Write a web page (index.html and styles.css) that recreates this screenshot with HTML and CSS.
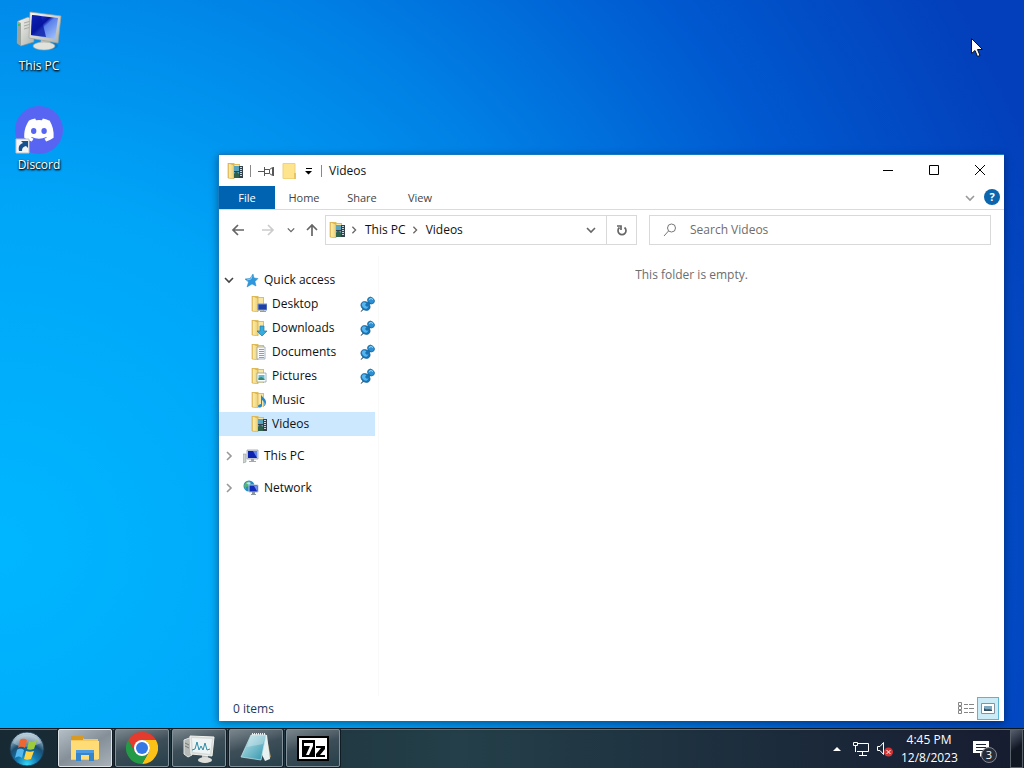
FILE: index.html
```html
<!DOCTYPE html>
<html lang="en">
  <head>
    <meta charset="utf-8">
    <meta name="viewport" content="width=device-width, initial-scale=1">
    <title>Videos</title>
    <link rel="stylesheet" href="styles.css">
  </head>
  <body>
    <!-- shared icons -->
    <svg class="defs" aria-hidden="true">
      <defs>
        <linearGradient id="g-folder" x1="0" x2="1" y1="0" y2="0">
          <stop offset="0" stop-color="#e6bd56"/><stop offset=".25" stop-color="#fae9a5"/><stop offset="1" stop-color="#edcf70"/>
        </linearGradient>
        <linearGradient id="g-screen" x1="0" x2="1" y1="0" y2="1">
          <stop offset="0" stop-color="#2b48d8"/><stop offset=".4" stop-color="#0714a0"/><stop offset=".5" stop-color="#5b80ea"/><stop offset="1" stop-color="#a6cbff"/>
        </linearGradient>
        <linearGradient id="g-metal" x1="0" x2="1" y1="0" y2="1">
          <stop offset="0" stop-color="#f8f8f3"/><stop offset="1" stop-color="#aeb1ac"/>
        </linearGradient>
        <linearGradient id="g-note" x1="0" x2="1" y1="0" y2="1">
          <stop offset="0" stop-color="#c9e9ee"/><stop offset="1" stop-color="#2b93ab"/>
        </linearGradient>
        <radialGradient id="g-orb" cx=".5" cy=".95" r=".9">
          <stop offset="0" stop-color="#35d6f7"/><stop offset=".35" stop-color="#137ab1"/><stop offset=".65" stop-color="#1b4e71"/><stop offset="1" stop-color="#bcd0da"/>
        </radialGradient>
        <symbol id="folder" viewBox="0 0 16 16">
          <path d="M1 0h6l1 1h5v14H1z" fill="#e3bd58"/>
          <path d="M4 2h8v13H4z" fill="#f7e6a4"/>
          <path d="M1 0l6 2v14l-6-1z" fill="url(#g-folder)" stroke="#d0a545" stroke-width=".6"/>
        </symbol>
        <symbol id="video" viewBox="0 0 16 16">
          <use href="#folder"/>
          <path d="M7 3h8v12H7z" fill="#5ba4bd"/>
          <path d="M7 11l2-3 4 4v3H7z" fill="#31614b"/>
          <path d="M12 3h4v12h-4zM7 8h5v1H7z" fill="#33414e"/>
          <path d="M13 4h2v1h-2zM13 6h2v1h-2zM13 8h2v1h-2zM13 10h2v1h-2zM13 12h2v1h-2z" fill="#cbd7df"/>
        </symbol>
        <symbol id="desktop" viewBox="0 0 16 16">
          <use href="#folder"/>
          <path d="M7 8h9v6H7z" fill="#1f3faa" stroke="#7995c5"/><path d="M9 15h6v1H9z" fill="#8e9eb1"/>
        </symbol>
        <symbol id="download" viewBox="0 0 16 16">
          <use href="#folder"/><path d="M9 6h4v5h3l-5 5-5-5h3z" fill="#35acde" stroke="#2279ae" stroke-width=".7"/>
        </symbol>
        <symbol id="document" viewBox="0 0 16 16">
          <use href="#folder"/><path d="M6 3h8v12H6z" fill="#f7f9fc" stroke="#93a5b8" stroke-width=".8"/><path d="M8 5.500h5M8 7.500h5M8 9.500h5M8 11.500h5M8 13.500h5" stroke="#6689b2" stroke-width=".8"/>
        </symbol>
        <symbol id="picture" viewBox="0 0 16 16">
          <use href="#folder"/><path d="M6 5h9v9H6z" fill="#f9ffff" stroke="#8ba1ac" stroke-width=".8"/><path d="M7.500 7h6v5h-6z" fill="#6bbad4"/><path d="M7.500 10l3-1 3 2v1h-6z" fill="#388870"/>
        </symbol>
        <symbol id="music" viewBox="0 0 16 16">
          <use href="#folder"/><path d="M10 2c0 3 5 4 5 8 0 2-1 4-2 4 1-3 0-5-2-6v6c-1 2-4 2-4 0 0-1 2-2 3-2z" fill="#2688ca"/>
        </symbol>
        <symbol id="computer" viewBox="0 0 16 16">
          <path d="M0 6h3v8l-3 1z" fill="#cdd4cf" stroke="#8a938f" stroke-width=".5"/>
          <path d="M4 2h11v9H4z" fill="#d6dce4" stroke="#8e96a3" stroke-width=".7"/><path d="M5 3h9v7H5z" fill="#0d22b0"/><path d="M10 3h4v7z" fill="#5f84e8"/>
          <path d="M8 11h3v2h2v1H6v-1h2z" fill="#a2a9ae"/>
        </symbol>
        <symbol id="network" viewBox="0 0 16 16">
          <circle cx="6" cy="6" r="5.500" fill="#258cc4"/><path d="M1 6c1-4 4-5 6-5l-2 3 1 2-3 1v3z" fill="#5ab56b"/><path d="M3 3l3-1 2 1-2 2z" fill="#b9e8ed"/>
          <path d="M6 5h9v7H6z" fill="#112bb8" stroke="#c1cbd7"/><path d="M11 6h3v5z" fill="#7092eb"/><path d="M9 12h3v2h1v1H8v-1h1z" fill="#8c969e"/>
        </symbol>
        <symbol id="pushpin" viewBox="0 0 16 16">
          <path d="M2 15.500l3-4 1 1z" fill="#6d8494" stroke="#6d8494"/>
          <ellipse cx="6.500" cy="10" rx="5" ry="4" transform="rotate(40 6.500 10)" fill="#1976b8" stroke="#155b8d" stroke-width=".6"/>
          <ellipse cx="6" cy="9.500" rx="3.500" ry="2.500" transform="rotate(40 6 9.500)" fill="#55b5ee"/>
          <path d="M6 9l4-5 3 3-5 4z" fill="#1b73b3"/>
          <ellipse cx="12" cy="4.500" rx="3.700" ry="3" transform="rotate(40 12 4.500)" fill="#2b8fd1" stroke="#155b8d" stroke-width=".6"/>
          <path d="M10 3.500l2-1 2 1" stroke="#9bdcfa" fill="none"/>
        </symbol>
        <symbol id="chev-down" viewBox="0 0 10 10"><path d="M1 3l4 4 4-4" fill="none" stroke="currentColor" stroke-width="1.600"/></symbol>
        <symbol id="chev-right" viewBox="0 0 10 10"><path d="M3 1l4 4-4 4" fill="none" stroke="currentColor" stroke-width="1.600"/></symbol>
        <symbol id="arrow" viewBox="0 0 14 14"><path d="M13 7H2M7 2L2 7l5 5" fill="none" stroke="currentColor" stroke-width="1.700"/></symbol>
      </defs>
    </svg>

    <main class="desktop">
      <div class="shortcuts">
        <a class="shortcut" href="#pc">
          <svg class="icon-48" viewBox="0 0 48 48">
            <path d="M3 14l10-4 6 3v22L6 39l-4-3z" fill="url(#g-metal)" stroke="#868c88" stroke-width=".6"/>
            <path d="M2 14l4 2v23l-4-3z" fill="#9da39d"/><path d="M9 16l7-2M9 19l7-2M9 22l7-2" stroke="#a5a9a4"/><path d="M3 17h2v2H3z" fill="#32c45c"/>
            <ellipse cx="31" cy="39" rx="12" ry="4" fill="#125f90" opacity=".4"/>
            <path d="M26 33h9l1 6H25z" fill="#c4c6c1"/><ellipse cx="29" cy="39" rx="11" ry="4" fill="#e1e2dc" stroke="#a2a59f" stroke-width=".6"/>
            <path d="M15 5l31 4-3 27-29-5z" fill="url(#g-metal)" stroke="#9fa29c" stroke-width=".7"/>
            <path d="M17 8l26 3-3 21-24-4z" fill="url(#g-screen)"/><path d="M17 8l9 1 5 21-15-2z" fill="#0516a2" opacity=".75"/>
          </svg>
          <span>This PC</span>
        </a>
        <a class="shortcut" href="#discord">
          <svg class="icon-48" viewBox="0 0 48 48">
            <circle cx="24" cy="24" r="24" fill="#5865f2"/>
            <path d="M34 14.500a25 25 0 0 0-6.200-1.900l-.8 1.600a24 24 0 0 0-6 0l-.8-1.600a25 25 0 0 0-6.200 1.900C10 20.500 9 26 9.300 31.800a25 25 0 0 0 7.500 3.700l1.700-2.700-2.400-1.200.6-.5a18 18 0 0 0 14.600 0l.6.5-2.400 1.200 1.600 2.700a25 25 0 0 0 7.500-3.700c.5-6.500-1-12.300-4-17.300z" fill="#fff"/>
            <ellipse cx="18.700" cy="25" rx="2.700" ry="3" fill="#5865f2"/><ellipse cx="29.100" cy="25" rx="2.700" ry="3" fill="#5865f2"/>
            <path d="M1 33h13v14H1z" fill="#f4f5f7" stroke="#c0c4c9"/><path d="M4 45c-1-5 1-7 4-8l-2-2h7v7l-2-2c-3 1-4 2-4 5z" fill="#17508e"/>
          </svg>
          <span>Discord</span>
        </a>
      </div>

      <section class="window">
        <header class="titlebar">
          <svg class="icon-16"><use href="#video"/></svg>
          <i class="sep"></i>
          <button class="quick" aria-label="Properties"><svg class="icon-16" viewBox="0 0 16 16"><path d="M0 8.500h6M6.500 4v9M6.500 6.500h5v4h-5M11.500 6.500l3-2v8l-3-2M15.500 4v9" fill="none" stroke="#555"/></svg></button>
          <button class="quick" aria-label="New folder"><svg class="icon-16" viewBox="0 0 16 16"><path d="M2 .500h12v15H2z" fill="#ffe48e" stroke="#efd27a"/><path d="M13 10h2v6h-2z" fill="#e9c460"/></svg></button>
          <button class="quick" aria-label="Customize"><svg class="icon-10" viewBox="0 0 10 10"><path d="M2 2h6v1H2zM1 5h7L4.500 8.500z"/></svg></button>
          <i class="sep"></i>
          <h1 class="title">Videos</h1>
          <div class="controls">
            <button aria-label="Minimize"><svg class="icon-12" viewBox="0 0 12 12"><path d="M1 5.500h10"/></svg></button>
            <button aria-label="Maximize"><svg class="icon-12" viewBox="0 0 12 12"><path d="M1.500.500h9v9h-9z"/></svg></button>
            <button aria-label="Close"><svg class="icon-12" viewBox="0 0 12 12"><path d="M1 0l10 10M11 0L1 10"/></svg></button>
          </div>
        </header>

        <nav class="tabs">
          <button class="tab tab-file">File</button>
          <button class="tab">Home</button>
          <button class="tab">Share</button>
          <button class="tab">View</button>
          <button class="expand" aria-label="Expand the ribbon"><svg class="icon-10"><use href="#chev-down"/></svg></button>
          <button class="help" aria-label="Help">?</button>
        </nav>

        <div class="toolbar">
          <div class="history">
            <button aria-label="Back"><svg class="icon-14"><use href="#arrow"/></svg></button>
            <button class="off" aria-label="Forward"><svg class="icon-14 flip"><use href="#arrow"/></svg></button>
            <button class="recent" aria-label="Recent locations"><svg class="icon-8"><use href="#chev-down"/></svg></button>
            <button class="up" aria-label="Up"><svg class="icon-14 turn"><use href="#arrow"/></svg></button>
          </div>
          <div class="address">
            <svg class="icon-16"><use href="#video"/></svg>
            <svg class="icon-8 crumb-sep"><use href="#chev-right"/></svg>
            <a href="#pc">This PC</a>
            <svg class="icon-8 crumb-sep"><use href="#chev-right"/></svg>
            <a href="#videos">Videos</a>
            <button class="drop" aria-label="Previous locations"><svg class="icon-10"><use href="#chev-down"/></svg></button>
            <button class="refresh" aria-label="Refresh"><svg class="icon-14" viewBox="0 0 14 14"><path d="M9.500 4.500a4 4 0 1 1-5 0M2 3h4v4" fill="none" stroke="currentColor" stroke-width="1.700"/></svg></button>
          </div>
          <label class="search">
            <svg class="icon-14" viewBox="0 0 14 14"><circle cx="8.500" cy="5" r="4" /><path d="M5.500 8L1 13"/></svg>
            <input type="search" placeholder="Search Videos" aria-label="Search Videos">
          </label>
        </div>

        <div class="panes">
          <nav class="tree">
            <a class="root" href="#quick">
              <svg class="icon-10 open"><use href="#chev-down"/></svg>
              <svg class="icon-16" viewBox="0 0 16 16"><path d="M10 2l1 4 4 .500-3 3 1 4.500-4-2-5 3 1.500-5L2 7l5-.500z" fill="#3097dc" stroke="#2388c9" stroke-width=".5"/><path d="M9 4l-1 3-4 1" stroke="#83ccf6" fill="none"/></svg>
              <span>Quick access</span>
            </a>
            <a class="leaf" href="#desktop-folder"><svg class="icon-16"><use href="#desktop"/></svg><span>Desktop</span><svg class="icon-16"><use href="#pushpin"/></svg></a>
            <a class="leaf" href="#downloads"><svg class="icon-16"><use href="#download"/></svg><span>Downloads</span><svg class="icon-16"><use href="#pushpin"/></svg></a>
            <a class="leaf" href="#documents"><svg class="icon-16"><use href="#document"/></svg><span>Documents</span><svg class="icon-16"><use href="#pushpin"/></svg></a>
            <a class="leaf" href="#pictures"><svg class="icon-16"><use href="#picture"/></svg><span>Pictures</span><svg class="icon-16"><use href="#pushpin"/></svg></a>
            <a class="leaf" href="#music-folder"><svg class="icon-16"><use href="#music"/></svg><span>Music</span></a>
            <a class="leaf selected" href="#videos"><svg class="icon-16"><use href="#video"/></svg><span>Videos</span></a>
            <a class="root spaced" href="#pc"><svg class="icon-10"><use href="#chev-right"/></svg><svg class="icon-16"><use href="#computer"/></svg><span>This PC</span></a>
            <a class="root spaced" href="#net"><svg class="icon-10"><use href="#chev-right"/></svg><svg class="icon-16"><use href="#network"/></svg><span>Network</span></a>
          </nav>
          <p class="content">This folder is empty.</p>
        </div>

        <footer class="status">
          <span>0 items</span>
          <div class="views">
            <button aria-label="Details"><svg class="icon-16" viewBox="0 0 16 16"><path d="M.5 1.500h3v3h-3zM.5 5.500h3v3h-3zM.5 9.500h3v3h-3zM6 3.500h4M11 3.500h5M6 7.500h4M11 7.500h5M6 11.500h4M11 11.500h5" fill="none" stroke="#858585"/></svg></button>
            <button class="active" aria-label="Large icons"><svg class="icon-16" viewBox="0 0 16 16"><path d="M1.500 2.500h13v10h-13z" fill="#fff" stroke="#84939d"/><path d="M4 5h8v5H4z" fill="#7da8bf"/><path d="M4 7c3 3 4 0 8 2v1H4z" fill="#334c5e"/></svg></button>
          </div>
        </footer>
      </section>

      <svg class="cursor" viewBox="0 0 12 19"><path d="M.5.5v15l3.500-3 2.500 6 2.500-1-2.500-6h5z" fill="#fff" stroke="#111"/></svg>
    </main>

    <footer class="taskbar">
      <button class="start" aria-label="Start">
        <svg class="icon-36" viewBox="0 0 36 36">
          <circle cx="18" cy="18" r="17" fill="url(#g-orb)" stroke="#17384e"/>
          <path d="M4 12C8 1 28 1 32 12c-8 4-20 6-28 0z" fill="#d9e7ee" opacity=".4"/>
          <path d="M11 9c3-2 5-1 7 0l-2 8c-2-1-4-2-7 0z" fill="#ee6632"/><path d="M20 10c2 1 4 1 8-1l-3 9c-3 1-5 1-7 0z" fill="#9dcb3b"/>
          <path d="M8 19c3-2 5-1 7 0l-2 8c-2-2-4-2-7 0z" fill="#55b9ef"/><path d="M17 20c3 1 5 1 8 0l-3 8c-3 1-5 1-7 0z" fill="#ffd447"/>
        </svg>
      </button>
      <div class="tasks">
        <button class="task current" aria-label="File Explorer">
          <svg class="icon-32" viewBox="0 0 32 32"><path d="M2 5h11l2 2h14v21H2z" fill="#f5c85b"/><path d="M2 4h12v4H2z" fill="#d99a24"/><path d="M2 9h28v18H2z" fill="#ffdc75"/><path d="M7 18h18v11h-5v-6h-8v6H7z" fill="#3485cb"/><path d="M7 18h18v3H7z" fill="#4d9be0"/></svg>
        </button>
        <button class="task" aria-label="Google Chrome">
          <svg class="icon-32" viewBox="0 0 32 32"><path d="M2.140 8a16 16 0 0 1 27.720 0H16L9.100 20z" fill="#e33b2e"/><path d="M29.860 8A16 16 0 0 1 16 32l6.900-12A8 8 0 0 0 16 8z" fill="#fbc116"/><path d="M16 32A16 16 0 0 1 2.140 8L9.100 20a8 8 0 0 0 13.800 0z" fill="#249a46"/><circle cx="16" cy="16" r="8" fill="#fff"/><circle cx="16" cy="16" r="6" fill="#3578e5"/></svg>
        </button>
        <button class="task" aria-label="Task Manager">
          <svg class="icon-32" viewBox="0 0 32 32"><path d="M1 8l8-3v18l-4 2-4-3z" fill="#b6bab8" stroke="#e3e5e2"/><path d="M2 11l4 2M2 14l4 2" stroke="#777"/><path d="M19 22h6v5h-6z" fill="#b7bbb9"/><ellipse cx="22" cy="28" rx="7" ry="3" fill="#dedfda"/><path d="M7 4l24 1-2 19-21-2z" fill="#d6dad9" stroke="#f2f3ef"/><path d="M9 6l20 1-2 15-17-2z" fill="#edf4f3"/><path d="M9 18l3-1 2-7 2 8 2-4 2 4 2-7 2 7 3-1" fill="none" stroke="#2f8aa7"/></svg>
        </button>
        <button class="task" aria-label="Notepad">
          <svg class="icon-32" viewBox="0 0 32 32"><path d="M26 3l5 22-5 3z" fill="#aa9360"/><path d="M12 2l15 1 3 24-5 2z" fill="#e8f1f1"/><path d="M11 3h15l-5 25-20-3z" fill="url(#g-note)" stroke="#c5e6e9" stroke-width=".7"/><path d="M11 3h15l-3 9-16 3z" fill="#fff" opacity=".3"/><path d="M12 2h14" stroke="#e8eeee" stroke-width="2" stroke-dasharray="1 1"/></svg>
        </button>
        <button class="task" aria-label="7-Zip">
          <svg class="icon-32" viewBox="0 0 32 32"><path d="M0 4h32v25H0z"/><path d="M2 6h28v21H2z" fill="#fff"/><path d="M5 8h13v17H5z"/><path d="M7 11h9v3l-4 9H9l4-9H7z" fill="#fff"/><path d="M19 14h9v3l-5 6h5v2h-9v-3l5-6h-5z"/></svg>
        </button>
      </div>
      <div class="tray">
        <button class="hidden-icons" aria-label="Show hidden icons"><svg class="icon-8" viewBox="0 0 8 8"><path d="M0 6l4-4 4 4z" fill="#fff"/></svg></button>
        <svg class="icon-16" viewBox="0 0 16 16"><path d="M5 2.500h10.500v8H4M9.500 11v3M6 14.500h8M.5 1.500h4v3h-4zM2.500 5v6" fill="none" stroke="#fff"/></svg>
        <svg class="icon-16" viewBox="0 0 16 16"><path d="M.5 5.500H3L6.500 1.500v12L3 9.500H.5z" fill="none" stroke="#fff"/><circle cx="11.500" cy="11" r="4.500" fill="#d93434"/><path d="M9.500 9l4 4M13.500 9l-4 4" stroke="#fff"/></svg>
        <time class="clock">4:45 PM<br>12/8/2023</time>
        <button class="notices" aria-label="Notifications">
          <svg class="icon-16" viewBox="0 0 16 16"><path d="M0 0h16v12h-5l-4 4v-4H0z" fill="#fff"/><path d="M3 3.500h10M3 6.500h10M3 9.500h7" stroke="#1b2533"/></svg>
          <span class="badge">3</span>
        </button>
      </div>
      <button class="peek" aria-label="Show desktop"></button>
    </footer>
  </body>
</html>
```
FILE: styles.css
```css
* { box-sizing: border-box }
body { margin: 0; height: 100vh; display: flex; flex-direction: column; overflow: hidden; font: 12px/18px "Open Sans", "Noto Sans", sans-serif; color: #111 }
button { margin: 0; padding: 0; border: 0; background: none; font: inherit; color: inherit; display: flex; align-items: center; justify-content: center }
a { color: inherit; text-decoration: none }
svg { display: block; flex: none }
.defs { position: absolute; width: 0; height: 0 }

.icon-8 { width: 8px; height: 8px }
.icon-10 { width: 10px; height: 10px }
.icon-12 { width: 12px; height: 12px }
.icon-14 { width: 14px; height: 14px }
.icon-16 { width: 16px; height: 16px }
.icon-32 { width: 32px; height: 32px }
.icon-36 { width: 36px; height: 36px }
.icon-48 { width: 48px; height: 48px }

/* desktop */
.desktop { flex: 1; position: relative; background: radial-gradient(ellipse 108% 150% at 0% 75%, #00b7ff 0%, #00a5f8 32%, #0083e6 55%, #0059d0 78%, #033fba 100%) }
.shortcuts { width: 78px; padding-top: 7px; display: flex; flex-direction: column; gap: 24px }
.shortcut { display: flex; flex-direction: column; align-items: center; gap: 2px; height: 75px; color: #fff; text-shadow: 1px 1px 2px #000, 0 1px 2px #000 }
.cursor { position: absolute; left: 971px; top: 38px; width: 12px; height: 19px }

/* explorer window */
.window { position: absolute; left: 218px; top: 154px; right: 20px; bottom: 7px; display: flex; flex-direction: column; background: #fff; border: 1px solid #1779bf; border-width: 1px 0 0 1px; box-shadow: 0 2px 8px rgba(0, 0, 0, .4) }
.titlebar { height: 31px; padding: 0 1px 0 8px; display: flex; align-items: center; gap: 7px }
.sep { width: 1px; height: 12px; background: #888 }
.title { margin: 0; font-size: 12px; font-weight: normal }
.controls { margin-left: auto; align-self: stretch; display: flex }
.controls button { width: 46px }
.controls path { fill: none; stroke: #000 }

.tabs { height: 24px; display: flex; border-bottom: 1px solid #dadbdc; color: #444; font-size: 11px }
.tab { width: 58px }
.tab-file { width: 56px; background: #0063b1; color: #fff }
.expand { width: 20px; margin-left: auto; color: #999 }
.help { width: 16px; height: 16px; margin: 3px 4px; border-radius: 50%; background: #0b66ad; color: #fff; font-weight: bold }

.toolbar { padding: 5px 13px 5px 12px; display: flex; color: #666 }
.history { width: 94px; display: flex; align-items: center; gap: 16px }
.history .off { color: #ccc }
.history .recent { margin-left: -4px }
.history .up { margin-left: -6px }
.flip { transform: scaleX(-1) }
.turn { transform: rotate(90deg) }
.address { flex: 1 1 312px; height: 30px; padding-left: 3px; display: flex; align-items: center; border: 1px solid #d9d9d9 }
.address a { color: #111 }
.crumb-sep { margin: 0 7px 0 5px }
.drop { width: 30px; height: 28px; margin-left: auto }
.refresh { width: 30px; height: 28px; border-left: 1px solid #d9d9d9 }
.search { flex: 1 1 342px; margin-left: 12px; padding-left: 13px; display: flex; align-items: center; gap: 13px; border: 1px solid #d9d9d9 }
.search svg { fill: none; stroke: #777 }
.search input { flex: 1; min-width: 0; padding: 0; border: 0; outline: 0; background: none; font: inherit; color: #111 }
.search input::placeholder { color: #6d6d6d; opacity: 1 }

.panes { flex: 1; display: flex; padding-top: 6px; min-height: 0 }
.tree { width: 160px; padding: 12px 3px 0 0; border-right: 1px solid #f9f9f9 }
.root, .leaf { height: 24px; display: flex; align-items: center }
.root { padding-left: 5px; color: #111 }
.root .icon-10 { color: #999 }
.root .open { color: #444 }
.root .icon-16 { margin: 0 5px 0 9px }
.spaced { margin-top: 8px }
.leaf { padding-left: 32px }
.leaf span { flex: 1; margin-left: 5px }
.selected { background: #cce8ff }
.content { flex: 1; margin: 10px 0 0; text-align: center; color: #6d6d6d }

.status { height: 25px; padding: 0 5px 0 14px; display: flex; align-items: center; justify-content: space-between; color: #1e395b }
.views { display: flex }
.views button { width: 22px; height: 23px }
.views .active { background: #cbecf6; border: 1px solid #5bb5d2 }

/* taskbar */
.taskbar { height: 40px; display: flex; align-items: stretch; padding-right: 1px; border-top: 1px solid #0c1720; background: linear-gradient(90deg, #172932, #243f49 45%, #1c2c3c 75%, #171c30); box-shadow: inset 0 1px #5d747c; color: #fff }
.start { width: 54px }
.tasks { margin-left: 4px; padding-bottom: 1px; display: flex; gap: 3px }
.task { width: 54px; border: 1px solid #82919a; border-radius: 2px; background: linear-gradient(165deg, #7b878e, #3e4e58 45%, #26404a); box-shadow: 0 0 0 1px #101b23 }
.task.current { border-color: #dce2e5; background: linear-gradient(150deg, #b4bec5, #858f98 50%, #a8b1b7) }
.tray { margin-left: auto; display: flex; align-items: center; gap: 8px }
.hidden-icons { margin-right: 4px }
.clock { width: 56px; text-align: center }
.notices { position: relative; width: 24px; height: 28px; margin: 0 13px 0 8px; justify-content: flex-start }
.badge { position: absolute; right: 0; bottom: 0; width: 16px; height: 16px; border: 1px solid #838790; border-radius: 50%; background: #262c38; font-size: 11px; line-height: 14px; text-align: center }
.peek { width: 13px; border: 1px solid #59616b; background: linear-gradient(145deg, #576070, #121724 50%) }
```
